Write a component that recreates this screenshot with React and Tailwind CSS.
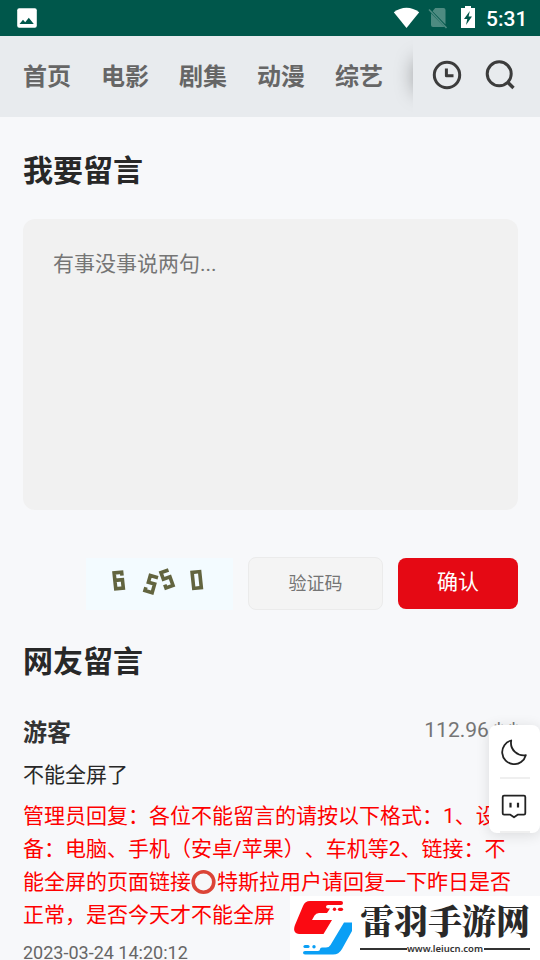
import React from "react";

const navItems = ["首页", "电影", "剧集", "动漫", "综艺"];

function StatusBar() {
  return (
    <div className="flex h-9 shrink-0 items-center bg-[#00574b] pl-[17px] pr-[13px] text-white">
      <svg width="20" height="20" viewBox="0 0 20 20">
        <rect x="0.2" y="0.2" width="19.6" height="19.6" rx="2" fill="#fff" />
        <path d="M2.5 16 L6 11.8 L8.2 14.2 L11.8 9.8 L16.8 16 Z" fill="#00574b" />
      </svg>
      <div className="flex-1" />
      <svg className="-mt-px mr-px" width="27" height="22" viewBox="0 0 27 22">
        <path d="M0.8 5.3 C8.5 -0.9 18.5 -0.9 26.2 5.3 L13.5 21 Z" fill="#fff" />
      </svg>
      <svg className="ml-[7px]" width="20" height="22" viewBox="0 0 20 22">
        <path d="M7.2 1 H15.5 Q17.5 1 17.5 3 V17.5 L4.5 4.3 Z M3 6.2 L16.5 20 H5 Q3 20 3 18 Z" fill="#4e8b81" />
        <path d="M1 2.5 L18.5 21" stroke="#4e8b81" strokeWidth="1.6" />
      </svg>
      <svg className="-mt-[2px] ml-[13px]" width="14" height="22" viewBox="0 0 14 22">
        <path d="M4 0 H10 V2 H14 V22 H0 V2 H4 Z" fill="#fff" />
        <path d="M8.8 5 L3 13 H6.3 L5 19 L11 10.6 H7.6 Z" fill="#00574b" />
      </svg>
      <span className="ml-[11px] w-[41px] whitespace-nowrap pt-px text-[21px] leading-9 font-medium">5:31</span>
    </div>
  );
}

function NavBar() {
  return (
    <div className="flex h-[81px] shrink-0 items-center bg-[#e8ebee] pl-[23px] pr-[24px]">
      <nav className="flex gap-[30px] pt-px text-2xl font-bold text-[#666]">
        {navItems.map((t) => (
          <a key={t} className="whitespace-nowrap">{t}</a>
        ))}
      </nav>
      <div className="ml-[1px] h-[75px] w-[29px] overflow-hidden">
        <div className="ml-[31px] mt-[21px] h-[32px] w-5 shadow-[0_0_20px_rgba(0,0,0,0.38)]" />
      </div>
      <div className="flex-1" />
      <svg className="mb-[4px]" width="30" height="30" viewBox="0 0 30 30" fill="none" stroke="#3c3c3c" strokeWidth="3">
        <circle cx="15" cy="15" r="12.7" />
        <path d="M14.4 8.6 V15.8 H21.5" strokeLinejoin="round" />
      </svg>
      <svg className="mb-[4px] ml-[23px]" width="31" height="30" viewBox="0 0 31 30" fill="none" stroke="#3c3c3c" strokeWidth="3">
        <circle cx="14.2" cy="13.8" r="12" />
        <path d="M22.7 22.2 L28.5 28" strokeWidth="3.4" />
      </svg>
    </div>
  );
}

function Captcha() {
  return (
    <svg width="147" height="52" viewBox="0 0 147 52">
      <rect width="147" height="52" fill="#f3fbff" />
      <g fill="none" stroke="#62643f" strokeWidth="3.6">
        <path transform="translate(32.7 22.5) rotate(-6)" d="M3.8 -4.5 V-8 H-3.8 V8 H3.8 V-0.5 H-3.8" />
        <path transform="translate(65 26) rotate(16)" d="M5 -8 H-3 V-1 H3.5 V8 H-4 V4.5" />
        <path transform="translate(81 21) rotate(-20)" d="M4.5 -8 H-3.5 V-1 H3.5 V8 H-4 V4.5" />
        <path transform="translate(110.7 22) rotate(-6)" d="M-3.8 -8 H3.8 V8 H-3.8 Z" />
      </g>
    </svg>
  );
}

function SideTools() {
  return (
    <div className="absolute left-[489px] top-[725px] flex h-[108px] w-[51px] flex-col items-center rounded-lg bg-white shadow-[0_2px_14px_rgba(0,0,0,0.12)]">
      <svg className="mr-px mt-[14px] shrink-0" width="26" height="26" viewBox="0 0 26 26" fill="none" stroke="#222" strokeWidth="1.8" strokeLinejoin="round">
        <path d="M10.2 1.5 A12 12 0 1 0 24.8 16.2 C17 17.5 8.5 11 10.2 1.5 Z" />
      </svg>
      <div className="mt-[12px] h-[2px] w-[30px] shrink-0 bg-[#efefef]" />
      <svg className="mr-px mt-[14px] shrink-0" width="26" height="26" viewBox="0 0 26 26" fill="none" stroke="#222" strokeWidth="1.8" strokeLinejoin="round">
        <path d="M3 2.7 H23 Q24.3 2.7 24.3 4 V20.3 Q24.3 21.6 23 21.6 H17 L13 24.3 L9 21.6 H3 Q1.7 21.6 1.7 20.3 V4 Q1.7 2.7 3 2.7 Z" />
        <path d="M9.5 9.8 V14.4 M17 9.8 V14.4" strokeWidth="2.2" />
      </svg>
      <div className="mt-auto h-[2px] w-[30px] shrink-0 bg-[#efefef]" />
    </div>
  );
}

function Watermark() {
  return (
    <div className="absolute left-[290px] top-[896px] flex h-16 w-[250px] bg-white">
      <svg className="ml-[3px] mt-[4px] shrink-0" width="60" height="56" viewBox="0 0 60 56">
        <path d="M17 1 H48 Q50 1 50 3 Q50 5 48 5 H35 Q33 5 33 6.7 Q33 8.4 35 8.4 H37 L34 13 H26 Q23 13 21.5 15.5 L19 20 H39 L30.5 34 H6 Q-1 33 2 25 L10 6 Q12 1 17 1 Z" fill="#fb0a12" />
        <path d="M51 22.5 H59 V31 L49 49 Q46 54.5 40 54.5 H12 Q10 54.5 10 52.7 Q10 51 12 51 H25 Q27 51 27 49.3 Q27 47.5 29 47.5 H33 Q36 47.5 37.5 45 Z" fill="#0a9ff5" />
        <g strokeLinecap="round" strokeWidth="3.2">
          <path d="M46.5 9.3 H48.5" stroke="#fb0a12" />
          <path d="M12 46.5 H15" stroke="#0a9ff5" />
        </g>
        <circle cx="41.5" cy="9.3" r="1.7" fill="#fb0a12" />
        <circle cx="21" cy="46.7" r="1.7" fill="#0a9ff5" />
      </svg>
      <div className="ml-[7px] flex w-[170px] flex-col">
        <div className="mt-[4px] h-[40px] whitespace-nowrap font-['Noto_Serif_CJK_SC','Noto_Sans_CJK_SC',serif] text-[34px] leading-[40px] font-black text-[#292929]">雷羽手游网</div>
        <div className="mt-[2px] flex h-[13px] items-center text-[#333]">
          <div className="h-[2px] flex-1 bg-[#333]" />
          <span className="w-[77px] text-center font-['Noto_Sans',sans-serif] text-[9.5px] leading-[13px] font-semibold">www.leiucn.com</span>
          <div className="h-[2px] flex-1 bg-[#333]" />
        </div>
      </div>
    </div>
  );
}

export default function App() {
  return (
    <div className="relative flex h-[960px] w-[540px] flex-col overflow-hidden bg-[#f7f8fa] font-[Roboto,'Noto_Sans_CJK_SC',sans-serif] text-[#282828] [text-spacing-trim:space-all]">
      <StatusBar />
      <NavBar />
      <main className="flex flex-col pl-[23px] pr-[22px]">
        <h1 className="mt-[32px] text-[30px] leading-[44px] font-bold">我要留言</h1>
        <div className="mt-[26px] h-[291px] rounded-xl bg-[#f1f1f1] px-[30px] pt-[29px] text-[21px] leading-[33px] text-[#757575]">
          有事没事说两句...
        </div>
        <div className="mt-[47px] flex h-[53px] items-center justify-end gap-[15px]">
          <Captcha />
          <div className="flex h-[53px] w-[135px] items-center justify-center rounded-lg border border-[#ebebeb] bg-[#f4f4f4] text-lg text-[#757575]">验证码</div>
          <button className="h-[51px] w-[120px] rounded-lg bg-[#e50914] pb-[2px] text-[21px] text-white">确认</button>
        </div>
        <h2 className="mt-[30px] text-[30px] leading-[44px] font-bold">网友留言</h2>
        <div className="mt-[30px] flex h-[38px] justify-between">
          <span className="text-2xl leading-[38px] font-bold text-[#333]">游客</span>
          <span className="text-[21px] leading-[33px] text-[#757575]">112.96.*.*</span>
        </div>
        <p className="mt-[7px] text-[21px] leading-[33px]">不能全屏了</p>
        <div className="mt-[8px] whitespace-nowrap text-[21px] leading-[33px] text-[#fe0000]">
          <p>管理员回复：各位不能留言的请按以下格式：1、设</p>
          <p>备：电脑、手机（安卓/苹果）、车机等2、链接：不</p>
          <p className="flex">
            能全屏的页面链接
            <svg className="mt-[3px]" width="26" height="26" viewBox="0 0 26 26">
              <circle cx="12.5" cy="13" r="10.3" fill="none" stroke="#db4437" strokeWidth="3.6" />
            </svg>
            特斯拉用户请回复一下昨日是否
          </p>
          <p>正常，是否今天才不能全屏</p>
        </div>
        <time className="mt-[9px] h-[23px] text-lg leading-[23px] text-[#666]">2023-03-24 14:20:12</time>
      </main>
      <SideTools />
      <Watermark />
    </div>
  );
}
